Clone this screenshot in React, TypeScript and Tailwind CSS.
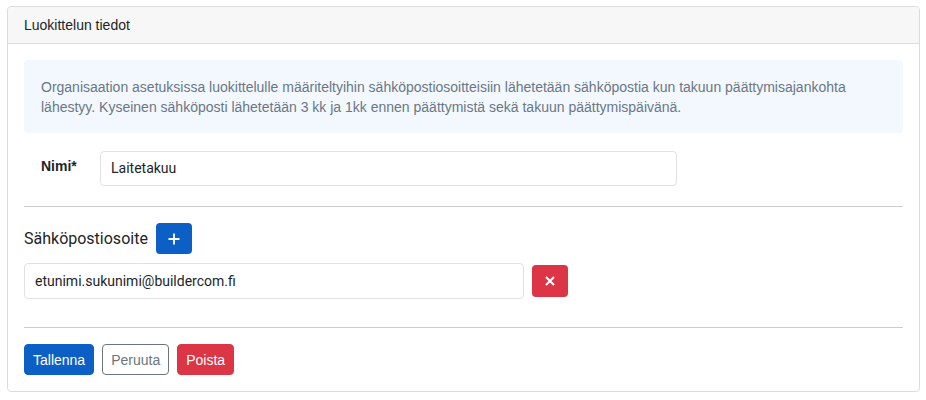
export default function App() {
  return (
    <div className="min-h-[400px] bg-white pl-[7px] pt-[6px] font-['Liberation_Sans',Arial,sans-serif]">
      <div className="w-[913px] rounded-[4px] border border-[#dcdcdc] bg-white">
        {/* Card header */}
        <div className="flex h-[37px] items-center rounded-t-[4px] border-b border-[#dcdcdc] bg-[#f7f7f7] px-4 text-[14px] text-[#212529]">
          Luokittelun tiedot
        </div>

        <div className="px-4 pb-4 pt-4">
          {/* Info alert */}
          <div className="rounded-[4px] bg-[#f2f8fe] px-[17px] pb-[16px] pt-[17px] text-[14px] leading-[20px] text-[#6b7785]">
            Organisaation asetuksissa luokittelulle määriteltyihin sähköpostiosoitteisiin lähetetään sähköpostia kun takuun
            päättymisajankohta lähestyy. Kyseinen sähköposti lähetetään 3 kk ja 1kk ennen päättymistä sekä takuun
            päättymispäivänä.
          </div>

          {/* Name row */}
          <div className="mt-[18px] flex items-start pl-[17px]">
            <label className="w-[59px] pt-[5px] text-[14px] font-bold leading-[20px] text-[#212529]">Nimi*</label>
            <div className="flex h-[35px] w-[577px] items-center rounded-[4px] border border-[#dee2e6] pl-[10px] font-['Roboto',sans-serif] text-[14px] text-[#212529]">
              Laitetakuu
            </div>
          </div>

          <div className="mt-[20px] border-t border-[#cccccc]" />

          {/* Email section */}
          <div className="mt-[16px] flex items-center gap-2">
            <span className="font-['Roboto',sans-serif] text-[16px] text-[#212529]">Sähköpostiosoite</span>
            <button className="flex h-[31px] w-[36px] items-center justify-center rounded-[4px] bg-[#0c5fc5]">
              <svg width="12" height="12" viewBox="0 0 12 12">
                <path d="M6 0.5v11M0.5 6h11" stroke="white" strokeWidth="1.8" />
              </svg>
            </button>
          </div>

          <div className="mt-[9px] flex items-center gap-2">
            <div className="flex h-[36px] w-[500px] items-center rounded-[4px] border border-[#dee2e6] pl-[10px] font-['Roboto',sans-serif] text-[14px] text-[#212529]">
              etunimi.sukunimi@buildercom.fi
            </div>
            <button className="flex h-[32px] w-[36px] items-center justify-center rounded-[4px] bg-[#dc3545]">
              <svg width="10" height="10" viewBox="0 0 10 10">
                <path d="M1 1l8 8M9 1l-8 8" stroke="white" strokeWidth="2" />
              </svg>
            </button>
          </div>

          <div className="mt-[28px] border-t border-[#cccccc]" />

          {/* Actions */}
          <div className="mt-[16px] flex gap-2 text-[14px] leading-[20px]">
            <button className="h-[31px] rounded-[4px] border border-[#0c5fc5] bg-[#0c5fc5] px-[8px] text-white">
              Tallenna
            </button>
            <button className="h-[31px] rounded-[4px] border border-[#6c757d] bg-white px-[8px] text-[#6c757d]">
              Peruuta
            </button>
            <button className="h-[31px] rounded-[4px] border border-[#dc3545] bg-[#dc3545] px-[8px] text-white">
              Poista
            </button>
          </div>
        </div>
      </div>
    </div>
  )
}
